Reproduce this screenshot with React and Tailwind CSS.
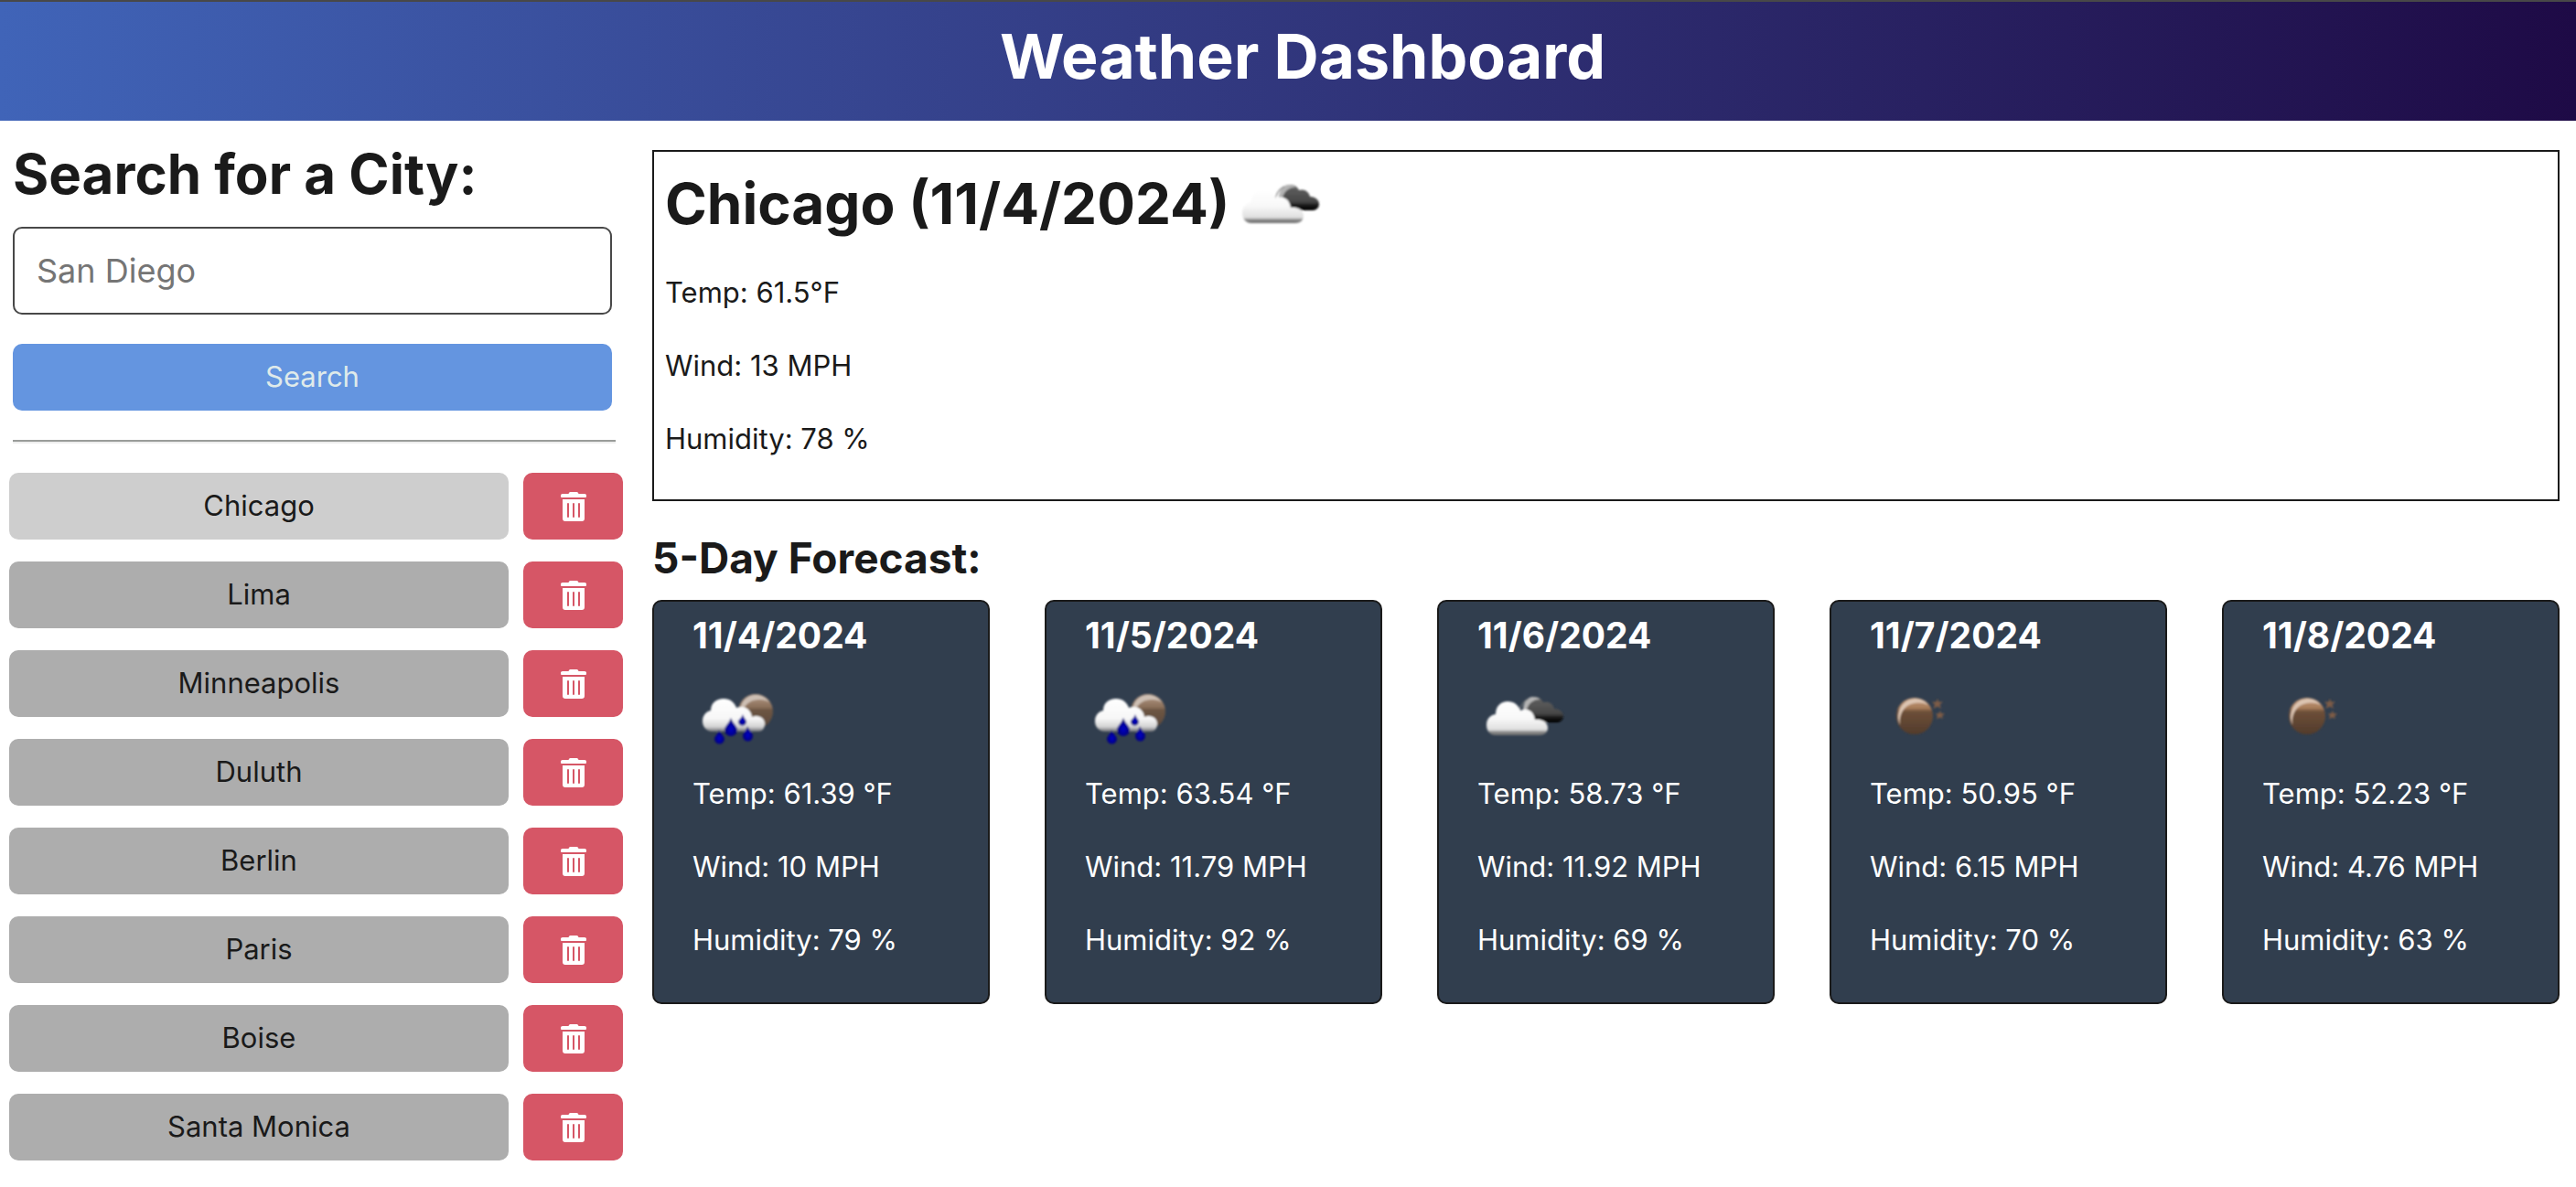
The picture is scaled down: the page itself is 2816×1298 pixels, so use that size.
import React, { useId, useState } from "react";

const cities = ["Chicago", "Lima", "Minneapolis", "Duluth", "Berlin", "Paris", "Boise", "Santa Monica"];

const forecast = [
  { date: "11/4/2024", icon: "rain", temp: "61.39", wind: "10", humidity: "79" },
  { date: "11/5/2024", icon: "rain", temp: "63.54", wind: "11.79", humidity: "92" },
  { date: "11/6/2024", icon: "clouds", temp: "58.73", wind: "11.92", humidity: "69" },
  { date: "11/7/2024", icon: "clear", temp: "50.95", wind: "6.15", humidity: "70" },
  { date: "11/8/2024", icon: "clear", temp: "52.23", wind: "4.76", humidity: "63" },
];

function CloudsIcon({ label }) {
  const id = useId();
  return (
    <svg role="img" aria-label={label} viewBox="0 0 100 100" className="size-[100px] shrink-0">
      <defs>
        <linearGradient id={id + "w"} x1="0" y1="0" x2="0" y2="1">
          <stop offset="0" stopColor="#fff" />
          <stop offset="0.5" stopColor="#f8f8f8" />
          <stop offset="0.84" stopColor="#dedede" />
          <stop offset="0.9" stopColor="#8a8a8a" />
          <stop offset="1" stopColor="#6e6e6e" />
        </linearGradient>
        <linearGradient id={id + "d"} x1="0" y1="0" x2="0" y2="1">
          <stop offset="0" stopColor="#626262" />
          <stop offset="0.65" stopColor="#484848" />
          <stop offset="0.85" stopColor="#0c0c0c" />
          <stop offset="1" stopColor="#000" />
        </linearGradient>
        <filter id={id + "s"} x="-10%" y="-10%" width="120%" height="120%">
          <feGaussianBlur stdDeviation="0.8" />
        </filter>
      </defs>
      <g filter={`url(#${id}s)`}>
        <path d="M50 41 C51 32 57 26 62 26 C67 26 70 28 72 32 C78 30 83 34 84 39 C90 39 94 43 94 47 C94 51 91 54 87 54 H62 C54 54 49 48 50 41Z" fill={`url(#${id}d)`} />
        <path d="M50 41 C50 32 54 27 60 26 C64 26 67 27 69 29 C63 28 55 33 54 41Z" fill="#b4b4b4" />
        <path d="M46 41 C48 34 51 30 56 28" fill="none" stroke="#777" strokeWidth="1.2" />
        <path d="M20 68 C13 68 10 62 10 57 C10 50 14 46 20 45 C20 36 26 31 33 31 C40 31 45 35 47 41 C56 37 62 43 63 51 C71 50 77 54 77 60 C77 65 73 68 68 68Z" fill={`url(#${id}w)`} />
      </g>
    </svg>
  );
}

function RainIcon({ label }) {
  const id = useId();
  const drops = [
    "M42 49 C44 55 49 58 49 62 A7 7 0 0 1 35 62 C35 58 40 55 42 49Z",
    "M55 45 C56 49 59 51 59 53 A4.500 4.500 0 0 1 50 53 C50 51 54 49 55 45Z",
    "M29 62 C31 67 35 69 35 72 A5.500 5.500 0 0 1 24 72 C24 69 28 67 29 62Z",
    "M60 58 C62 63 66 65 66 69 A5.500 5.500 0 0 1 55 69 C55 65 59 63 60 58Z",
  ];
  return (
    <svg role="img" aria-label={label} viewBox="0 0 100 100" className="size-[100px] shrink-0">
      <defs>
        <linearGradient id={id + "w"} x1="0" y1="0" x2="0" y2="1">
          <stop offset="0" stopColor="#fff" />
          <stop offset="0.6" stopColor="#f7f7f7" />
          <stop offset="0.85" stopColor="#d4d4d4" />
          <stop offset="1" stopColor="#6e7074" />
        </linearGradient>
        <linearGradient id={id + "m"} x1="0" y1="0" x2="0" y2="1">
          <stop offset="0" stopColor="#b59a85" />
          <stop offset="0.38" stopColor="#8a6f5a" />
          <stop offset="0.46" stopColor="#6c5543" />
          <stop offset="1" stopColor="#5c493b" />
        </linearGradient>
        <radialGradient id={id + "r"} cx="0.5" cy="0.6" r="0.6">
          <stop offset="0" stopColor="#0000c8" />
          <stop offset="1" stopColor="#000066" />
        </radialGradient>
        <filter id={id + "s"} x="-10%" y="-10%" width="120%" height="120%">
          <feGaussianBlur stdDeviation="0.8" />
        </filter>
      </defs>
      <g filter={`url(#${id}s)`}>
        <circle cx="69" cy="42" r="19" fill={`url(#${id}m)`} />
        <path d="M52 42 C52 31 60 24 69 24 C75 24 81 27 84 32 C77 27 59 27 55 42Z" fill="#cdbfb4" />
        <path d="M22 64 C14 64 11 57 11 53 C11 46 15 42 20 41 C20 33 26 28 34 28 C41 28 46 32 48 38 C57 35 64 40 65 48 C73 45 79 50 79 55 C79 61 76 64 72 64Z" fill={`url(#${id}w)`} />
        {drops.map((d) => (
          <path key={d} d={d} fill={`url(#${id}r)`} />
        ))}
      </g>
    </svg>
  );
}

function ClearIcon({ label }) {
  const id = useId();
  return (
    <svg role="img" aria-label={label} viewBox="0 0 100 100" className="size-[100px] shrink-0">
      <defs>
        <linearGradient id={id + "m"} x1="0" y1="0" x2="0" y2="1">
          <stop offset="0" stopColor="#c39a7a" />
          <stop offset="0.28" stopColor="#a87c5a" />
          <stop offset="0.38" stopColor="#6d4f39" />
          <stop offset="1" stopColor="#523b2b" />
        </linearGradient>
        <filter id={id + "s"} x="-10%" y="-10%" width="120%" height="120%">
          <feGaussianBlur stdDeviation="0.8" />
        </filter>
      </defs>
      <g filter={`url(#${id}s)`}>
        <circle cx="49" cy="47" r="20" fill={`url(#${id}m)`} />
        <path d="M33 57 C27 43 36 28 50 28 C56 28 61 31 64 35 C56 31 47 32 41 36 C34 41 32 49 33 57Z" fill="#dcc5b2" />
        <path d="M74 28 L75.500 31.500 L80 31.500 L76.500 34.500 L78 39 L74 36.500 L69.500 39 L71 34.500 L68 31.500 L72.500 31.500Z" fill="#7d5c46" />
        <path d="M77 41 L78 44 L82 44.500 L79 47 L80 50 L76.500 48.500 L73 50.500 L74 47 L72 44.500 L75.500 44Z" fill="#7d5c46" />
      </g>
    </svg>
  );
}

function TrashIcon() {
  return (
    <svg viewBox="0 0 28 32" className="h-8 w-7" aria-hidden="true" fill="currentColor">
      <path d="M9 1 Q9.500 0 10.500 0 H17.500 Q18.500 0 19 1 L19.500 2 H26 Q28 2 28 3.500 V5 Q28 6 27 6 H1 Q0 6 0 5 V3.500 Q0 2 2 2 H8.500Z" />
      <path fillRule="evenodd" d="M2 8 H26 V29 Q26 32 23 32 H5 Q2 32 2 29Z M7 13 V27 Q7 28 8 28 Q9 28 9 27 V13 Q9 12 8 12 Q7 12 7 13Z M13 13 V27 Q13 28 14 28 Q15 28 15 27 V13 Q15 12 14 12 Q13 12 13 13Z M19 13 V27 Q19 28 20 28 Q21 28 21 27 V13 Q21 12 20 12 Q19 12 19 13Z" />
    </svg>
  );
}

const icons = { rain: RainIcon, clouds: CloudsIcon, clear: ClearIcon };

function ForecastCard({ day }) {
  const Icon = icons[day.icon];
  return (
    <article className="flex flex-col rounded-[10px] border-2 border-[#1a1a1a] bg-[#313e4e] px-[42px] pt-3 pb-11 text-white">
      <h4 className="text-[39px] leading-[50px] font-bold">{day.date}</h4>
      <div className="mt-4">
        <Icon label={day.icon} />
      </div>
      <div className="mt-2 flex flex-col gap-8 text-[31px] leading-[48px]">
        <p>Temp: {day.temp} °F</p>
        <p>Wind: {day.wind} MPH</p>
        <p>Humidity: {day.humidity} %</p>
      </div>
    </article>
  );
}

export default function App() {
  const [query, setQuery] = useState("");
  return (
    <div className="bg-white font-[Inter,'Liberation_Sans',sans-serif] text-[#1a1a1a]">
      <header className="border-t-2 border-[#484848] bg-linear-to-r from-[#4064b8] to-[#1e0a46] pt-3 pr-6 pb-6 pl-14 text-center">
        <h1 className="text-[68px] leading-[94px] font-bold text-white">Weather Dashboard</h1>
      </header>

      <div className="flex items-start gap-8 pr-[18px]">
        <aside className="w-[681px] shrink-0 pt-5 pl-[10px]">
          <form className="pr-3 pl-1" onSubmit={(e) => e.preventDefault()}>
            <label htmlFor="city" className="block text-[60px] leading-[76px] font-bold">
              Search for a City:
            </label>
            <input
              id="city"
              type="text"
              placeholder="San Diego"
              value={query}
              onChange={(e) => setQuery(e.target.value)}
              className="mt-5 block h-24 w-full rounded-[10px] border-2 border-[#484848] px-6 text-[36px] placeholder:text-[#757575]"
            />
            <button type="submit" className="mt-8 block h-[73px] w-full rounded-[10px] bg-[#6495e0] text-[31px] text-[#dfeaea]">
              Search
            </button>
          </form>
          <hr className="mt-8 mr-2 ml-1 border-t-2 border-b-2 border-t-[#9a9c9a] border-b-[#eeeeee]" />
          <ul className="mt-8 flex flex-col gap-6">
            {cities.map((city, i) => (
              <li key={city} className="flex gap-4">
                <button
                  type="button"
                  className={"h-[73px] grow rounded-[10px] text-[31px] " + (i === 0 ? "bg-[#cecece]" : "bg-[#adadad]")}
                >
                  {city}
                </button>
                <button
                  type="button"
                  aria-label={"Delete " + city}
                  className="flex w-[109px] items-center justify-center rounded-[10px] bg-[#d65666] text-white"
                >
                  <TrashIcon />
                </button>
              </li>
            ))}
          </ul>
        </aside>

        <main className="min-w-0 grow pt-8">
          <section className="border-2 border-[#1a1a1a] px-3 pt-[10px] pb-[42px]">
            <div className="flex items-start gap-1">
              <h2 className="text-[62px] leading-[94px] font-bold">Chicago (11/4/2024)</h2>
              <CloudsIcon label="clouds" />
            </div>
            <div className="mt-5 flex flex-col gap-8 text-[31px] leading-[48px]">
              <p>Temp: 61.5°F</p>
              <p>Wind: 13 MPH</p>
              <p>Humidity: 78 %</p>
            </div>
          </section>

          <h3 className="mt-[30px] text-[46px] leading-[64px] font-bold">5-Day Forecast:</h3>
          <section className="mt-[14px] grid grid-cols-5 gap-[60px]">
            {forecast.map((day) => (
              <ForecastCard key={day.date} day={day} />
            ))}
          </section>
        </main>
      </div>
    </div>
  );
}
